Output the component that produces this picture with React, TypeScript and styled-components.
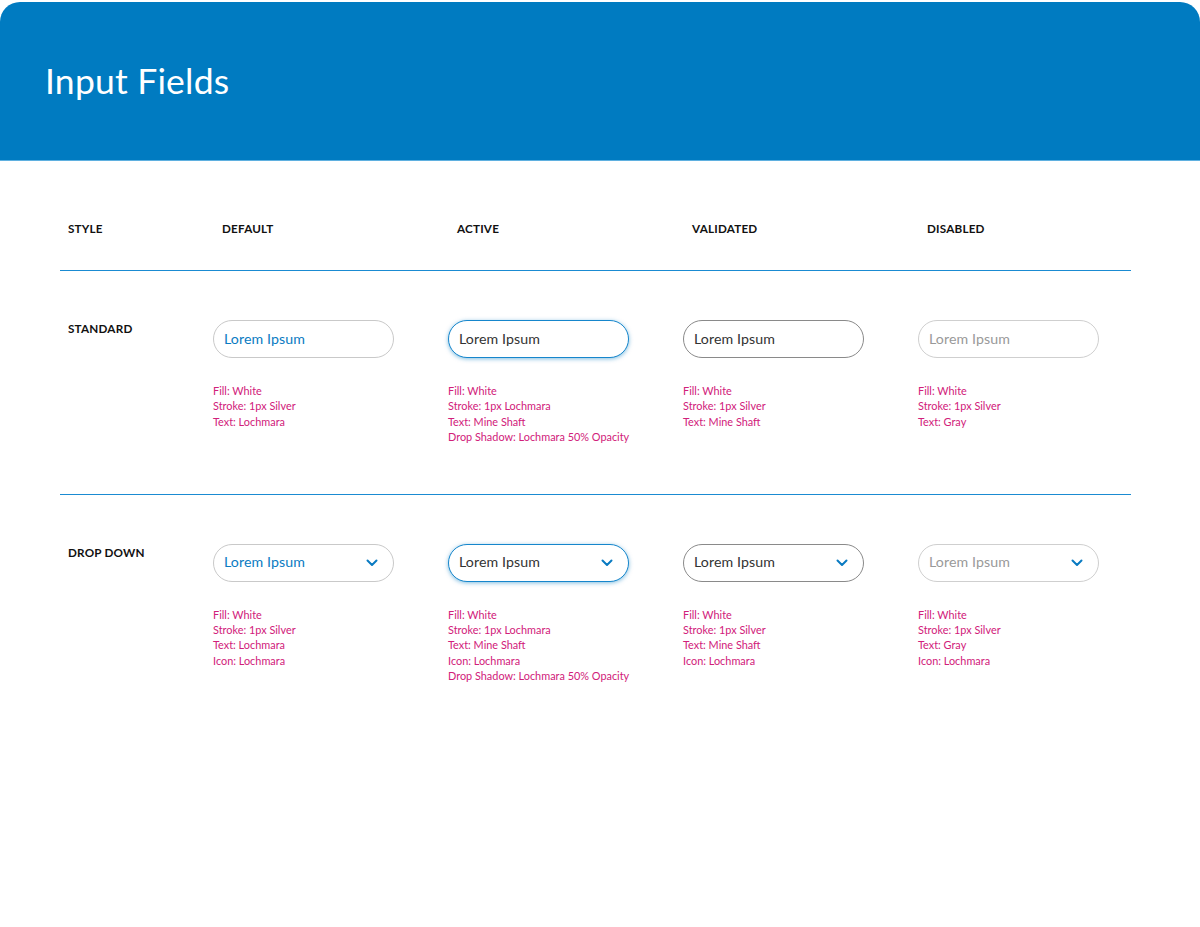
import React from "react";
import styled, { createGlobalStyle, css } from "styled-components";

const GlobalStyle = createGlobalStyle`
  html, body { margin: 0; padding: 0; background: #ffffff; }
  body { font-family: "Lato", "Noto Sans", "Liberation Sans", sans-serif; -webkit-font-smoothing: antialiased; }
  * { box-sizing: border-box; }
`;

const Page = styled.div`
  width: 1200px;
  min-height: 927px;
  padding-top: 2px;
  background: #fff;
`;

const Header = styled.header`
  height: 159px;
  background: #007bc1;
  border-radius: 20px 20px 0 0;
  border-bottom: 1px solid #5fb0e0;
  display: flex;
  align-items: center;
  padding-left: 45px;
`;

const Title = styled.h1`
  margin: 0 0 1px 0;
  color: #ffffff;
  font-size: 35.5px;
  font-weight: 400;
  letter-spacing: 0.2px;
`;

const Table = styled.div`
  margin-left: 60px;
  width: 1071px;
`;

const Row = styled.div<{ $head?: boolean }>`
  display: grid;
  grid-template-columns: 145px 235px 235px 235px 1fr;
  padding-left: 8px;
  border-bottom: 1px solid #1a8bd2;
  ${(p) =>
    p.$head
      ? css`
          padding-top: 59px;
          padding-bottom: 34px;
        `
      : css`
          padding-top: 49px;
          padding-bottom: 49px;
        `}
  &:last-child {
    border-bottom: none;
  }
`;

const HeadLabel = styled.div<{ $inset?: boolean }>`
  font-size: 11.7px;
  line-height: 16px;
  font-weight: 700;
  color: #111;
  letter-spacing: 0.2px;
  padding-left: ${(p) => (p.$inset ? "9px" : "0")};
`;

const RowLabel = styled.div`
  font-size: 11.7px;
  line-height: 16px;
  font-weight: 700;
  color: #111;
  letter-spacing: 0.2px;
`;

const Cell = styled.div`
  display: flex;
  flex-direction: column;
`;

type State = "default" | "active" | "validated" | "disabled";

const borderFor: Record<State, string> = {
  default: "#c9c9c9",
  active: "#1686cc",
  validated: "#8a8a8a",
  disabled: "#cfcfcf",
};

const textFor: Record<State, string> = {
  default: "#0a7bc2",
  active: "#333333",
  validated: "#333333",
  disabled: "#999999",
};

const Field = styled.div<{ $state: State }>`
  width: 181px;
  height: 38px;
  border-radius: 19px;
  background: #fff;
  border: 1px solid ${(p) => borderFor[p.$state]};
  box-shadow: ${(p) => (p.$state === "active" ? "0 1px 4px rgba(0, 123, 193, 0.5)" : "none")};
  display: flex;
  align-items: center;
  justify-content: space-between;
  padding: 0 15px 2px 10px;
  color: ${(p) => textFor[p.$state]};
  font-size: 14.2px;
  letter-spacing: 0.1px;
`;

const ChevronSlot = styled.span`
  display: flex;
  margin-top: 2px;
`;

const Notes = styled.div`
  margin-top: 25px;
  display: flex;
  flex-direction: column;
`;

const Note = styled.div`
  font-size: 10.9px;
  line-height: 15.4px;
  color: #d1207a;
  white-space: nowrap;
`;

const Chevron = () => (
  <ChevronSlot>
    <svg width="12" height="8" viewBox="0 0 12 8" fill="none">
      <path d="M1.5 1.5 L6 6 L10.5 1.5" stroke="#0a7bc2" strokeWidth="2" strokeLinecap="round" strokeLinejoin="round" />
    </svg>
  </ChevronSlot>
);

const states: State[] = ["default", "active", "validated", "disabled"];

const standardNotes: Record<State, string[]> = {
  default: ["Fill: White", "Stroke: 1px Silver", "Text: Lochmara"],
  active: ["Fill: White", "Stroke: 1px Lochmara", "Text: Mine Shaft", "Drop Shadow: Lochmara 50% Opacity"],
  validated: ["Fill: White", "Stroke: 1px Silver", "Text: Mine Shaft"],
  disabled: ["Fill: White", "Stroke: 1px Silver", "Text: Gray"],
};

const dropNotes: Record<State, string[]> = {
  default: ["Fill: White", "Stroke: 1px Silver", "Text: Lochmara", "Icon: Lochmara"],
  active: ["Fill: White", "Stroke: 1px Lochmara", "Text: Mine Shaft", "Icon: Lochmara", "Drop Shadow: Lochmara 50% Opacity"],
  validated: ["Fill: White", "Stroke: 1px Silver", "Text: Mine Shaft", "Icon: Lochmara"],
  disabled: ["Fill: White", "Stroke: 1px Silver", "Text: Gray", "Icon: Lochmara"],
};

export default function App() {
  return (
    <>
      <GlobalStyle />
      <Page>
        <Header>
          <Title>Input Fields</Title>
        </Header>
        <Table>
          <Row $head>
            <HeadLabel>STYLE</HeadLabel>
            <HeadLabel $inset>DEFAULT</HeadLabel>
            <HeadLabel $inset>ACTIVE</HeadLabel>
            <HeadLabel $inset>VALIDATED</HeadLabel>
            <HeadLabel $inset>DISABLED</HeadLabel>
          </Row>
          <Row>
            <RowLabel>STANDARD</RowLabel>
            {states.map((s) => (
              <Cell key={s}>
                <Field $state={s}>Lorem Ipsum</Field>
                <Notes>
                  {standardNotes[s].map((n) => (
                    <Note key={n}>{n}</Note>
                  ))}
                </Notes>
              </Cell>
            ))}
          </Row>
          <Row>
            <RowLabel>DROP DOWN</RowLabel>
            {states.map((s) => (
              <Cell key={s}>
                <Field $state={s}>
                  <span>Lorem Ipsum</span>
                  <Chevron />
                </Field>
                <Notes>
                  {dropNotes[s].map((n) => (
                    <Note key={n}>{n}</Note>
                  ))}
                </Notes>
              </Cell>
            ))}
          </Row>
        </Table>
      </Page>
    </>
  );
}
